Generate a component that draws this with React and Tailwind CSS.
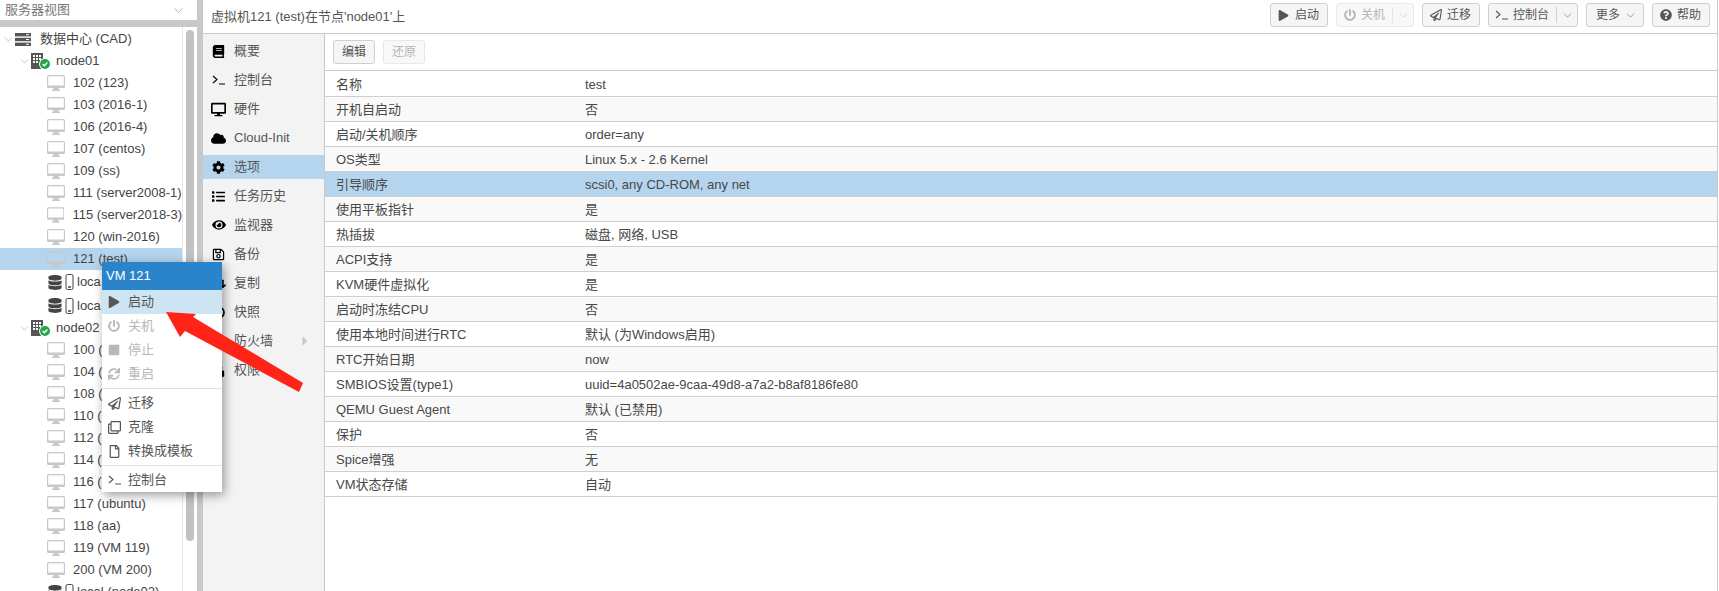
import { ChevronDown } from 'lucide-react';
import { FaBook, FaCloud, FaCog, FaList, FaEye, FaRegSave, FaRetweet, FaHistory, FaShieldAlt, FaUnlock, FaPlay, FaPowerOff, FaStop, FaSync, FaRegPaperPlane, FaRegClone, FaRegFile, FaQuestionCircle, FaDatabase, FaDesktop, FaCaretRight } from 'react-icons/fa';

const FONT = 'font-["Liberation_Sans","Noto_Sans_CJK_SC",sans-serif]';

function MonitorIcon() {
  return (
    <svg viewBox="0 0 18 16" className="w-[18px] h-4 text-[#c8c8c8]" fill="currentColor">
      <path d="M1.500 0h15A1.500 1.500 0 0 1 18 1.500v10a1.500 1.500 0 0 1-1.500 1.500H11.500v1.500H13V16H5v-1.500h1.500V13h-5A1.500 1.500 0 0 1 0 11.500v-10A1.500 1.500 0 0 1 1.500 0zM1.200 1.200V10.500h15.600V1.200z" fillRule="evenodd" />
    </svg>
  );
}

function ServerIcon() {
  return (
    <svg viewBox="0 0 16 13" className="w-4 h-[13px] text-[#555]" fill="currentColor">
      <rect x="0" y="0" width="16" height="3.400" />
      <rect x="0" y="4.800" width="16" height="3.400" />
      <rect x="0" y="9.600" width="16" height="3.400" />
      <rect x="11" y="1.200" width="3" height="1" fill="#fff" />
      <rect x="11" y="6" width="3" height="1" fill="#fff" />
      <rect x="11" y="10.800" width="3" height="1" fill="#fff" />
    </svg>
  );
}

function NodeIcon() {
  return (
    <span className="relative w-[18px] h-4 shrink-0">
      <svg viewBox="0 0 12 16" className="w-3 h-4 text-[#555]" fill="currentColor">
        <path d="M0 0h12v16H0zM2 2v2h2V2zm3 0v2h2V2zm3 0v2h2V2zM2 5v2h2V5zm3 0v2h2V5zm3 0v2h2V5zM2 8v2h2V8zm3 0v2h2V8z" fillRule="evenodd" />
      </svg>
      <span className="absolute left-[9px] top-[6px] w-[10px] h-[10px] rounded-full bg-[#21a646] ring-1 ring-white flex items-center justify-center">
        <svg viewBox="0 0 10 10" className="w-2 h-2" fill="none" stroke="#fff" strokeWidth="1.800"><path d="M2 5l2.200 2.200L8 3" /></svg>
      </span>
    </span>
  );
}

function StorageIcon() {
  return (
    <span className="flex items-center gap-[3px]">
      <FaDatabase size={15} className="text-[#444] w-[14px]" />
      <svg viewBox="0 0 9 16" className="w-[9px] h-4 text-[#444]" fill="none" stroke="currentColor">
        <rect x="1" y="0.500" width="7" height="15" rx="1.500" />
        <path d="M3 13h3" strokeWidth="1.500" />
      </svg>
    </span>
  );
}

function Prompt() {
  return (
    <svg viewBox="0 0 13 10" className="w-[13px] h-[10px]" fill="none" stroke="currentColor" strokeWidth="1.100">
      <path d="M1 1l4 3.500L1 8M7 9h6" />
    </svg>
  );
}

function VmRow({ label, selected }) {
  return (
    <div className={`flex items-center h-[22px] pl-[47px] whitespace-nowrap ${selected ? 'bg-[#b5d5ee]' : ''}`}>
      <MonitorIcon />
      <span className="ml-[8px] text-[13px] text-[#444]">{label}</span>
    </div>
  );
}

function StorageRow({ label, className }) {
  return (
    <div className={`flex items-center pl-[48px] whitespace-nowrap ${className}`}>
      <StorageIcon />
      <span className="ml-[3px] text-[13px] text-[#444]">{label}</span>
    </div>
  );
}

function NodeRow({ label }) {
  return (
    <div className="flex items-center h-[22px] pl-[18px] whitespace-nowrap">
      <ChevronDown size={13} strokeWidth={1} className="text-[#999] shrink-0" />
      <NodeIcon />
      <span className="ml-[7px] text-[13px] text-[#444]">{label}</span>
    </div>
  );
}

const NODE1 = ['102 (123)', '103 (2016-1)', '106 (2016-4)', '107 (centos)', '109 (ss)', '111 (server2008-1)', '115 (server2018-3)', '120 (win-2016)'];
const NODE2 = ['100 (', '104 (', '108 (', '110 (', '112 (', '114 (', '116 (', '117 (ubuntu)', '118 (aa)', '119 (VM 119)', '200 (VM 200)'];

const NAV = [
  { label: '概要', icon: <FaBook size={13} /> },
  { label: '控制台', icon: <Prompt /> },
  { label: '硬件', icon: <FaDesktop size={15} /> },
  { label: 'Cloud-Init', icon: <FaCloud size={15} /> },
  { label: '选项', icon: <FaCog size={13} />, active: true },
  { label: '任务历史', icon: <FaList size={13} /> },
  { label: '监视器', icon: <FaEye size={14} /> },
  { label: '备份', icon: <FaRegSave size={13} /> },
  { label: '复制', icon: <FaRetweet size={15} /> },
  { label: '快照', icon: <FaHistory size={13} /> },
  { label: '防火墙', icon: <FaShieldAlt size={13} />, more: true },
  { label: '权限', icon: <FaUnlock size={13} /> },
];

const ROWS = [
  ['名称', 'test'],
  ['开机自启动', '否'],
  ['启动/关机顺序', 'order=any'],
  ['OS类型', 'Linux 5.x - 2.6 Kernel'],
  ['引导顺序', 'scsi0, any CD-ROM, any net', true],
  ['使用平板指针', '是'],
  ['热插拔', '磁盘, 网络, USB'],
  ['ACPI支持', '是'],
  ['KVM硬件虚拟化', '是'],
  ['启动时冻结CPU', '否'],
  ['使用本地时间进行RTC', '默认 (为Windows启用)'],
  ['RTC开始日期', 'now'],
  ['SMBIOS设置(type1)', 'uuid=4a0502ae-9caa-49d8-a7a2-b8af8186fe80'],
  ['QEMU Guest Agent', '默认 (已禁用)'],
  ['保护', '否'],
  ['Spice增强', '无'],
  ['VM状态存储', '自动'],
];

function ToolButton({ icon, label, disabled, split, width }) {
  return (
    <div className={`h-[24px] flex items-center rounded-[3px] border pl-[6px] text-[12px] whitespace-nowrap ${width} ${disabled ? 'border-[#e8e8e8] bg-[#f8f8f8] text-[#b5b5b5]' : 'border-[#cfcfcf] bg-[#f5f5f5] text-[#555]'}`}>
      <span className="w-[13px] flex justify-center">{icon}</span>
      <span className="ml-[5px]">{label}</span>
      {split && <span className={`ml-[7px] w-px h-[16px] ${disabled ? 'bg-[#e4e4e4]' : 'bg-[#d0d0d0]'}`} />}
      {split && <span className="flex-1 flex justify-center"><ChevronDown size={13} strokeWidth={1} /></span>}
    </div>
  );
}

function MenuItem({ icon, label, disabled, active }) {
  return (
    <div className={`h-[24px] flex items-center pl-[5px] text-[13px] ${active ? 'bg-[#cde4f3] text-[#555]' : disabled ? 'text-[#b8b8b8]' : 'text-[#555]'}`}>
      <span className="w-[14px] flex justify-center">{icon}</span>
      <span className="ml-[7px]">{label}</span>
    </div>
  );
}

function MenuSeparator() {
  return <div className="h-[5px] pt-[2px]"><div className="h-px bg-[#e0e0e0]" /></div>;
}

export default function App() {
  return (
    <div className={`${FONT} w-[1719px] h-[591px] overflow-hidden flex bg-white relative`}>
      <aside className="w-[197px] shrink-0 flex flex-col">
        <div className="h-[20px] bg-white flex items-center justify-between pl-[5px] pr-[11px]">
          <span className="text-[13px] text-[#777]">服务器视图</span>
          <ChevronDown size={15} strokeWidth={1} className="text-[#888]" />
        </div>
        <div className="h-[7px] bg-[#c8c8c8]" />
        <div className="flex-1 flex min-h-0">
          <div className="w-[183px] bg-white pt-[1px] overflow-hidden border-r border-[#e6e6e6]">
            <div className="flex items-center h-[22px] pl-[2px] whitespace-nowrap">
              <ChevronDown size={13} strokeWidth={1} className="text-[#999] shrink-0" />
              <ServerIcon />
              <span className="ml-[9px] text-[13px] text-[#444]">数据中心 (CAD)</span>
            </div>
            <NodeRow label="node01" />
            {NODE1.map((n) => <VmRow key={n} label={n} />)}
            <VmRow selected label="121 (test)" />
            <StorageRow label="loca" className="h-[24px]" />
            <StorageRow label="loca" className="h-[23px]" />
            <NodeRow label="node02" />
            {NODE2.map((n) => <VmRow key={n} label={n} />)}
            <StorageRow label="local (node02)" className="h-[22px]" />
          </div>
          <div className="w-[14px] bg-white pt-[3px] pl-[3px] shrink-0">
            <div className="w-[8px] h-[511px] rounded-full bg-[#c2c2c2]" />
          </div>
        </div>
      </aside>
      <div className="w-[6px] shrink-0 bg-[#c8c8c8]" />
      <main className="flex-1 flex flex-col min-w-0 mr-[1px] border-r border-[#c8c8c8]">
        <header className="h-[34px] bg-white border-b border-[#c8c8c8] flex items-center pl-[8px] pr-[7px] shrink-0">
          <span className="text-[13px] text-[#555]">虚拟机121 (test)在节点'node01'上</span>
          <div className="ml-auto self-start mt-[3px] flex items-center gap-[8px]">
            <ToolButton width="w-[58px]" icon={<FaPlay size={11} />} label="启动" />
            <ToolButton width="w-[78px]" disabled icon={<FaPowerOff size={12} />} label="关机" split />
            <ToolButton width="w-[58px]" icon={<FaRegPaperPlane size={12} />} label="迁移" />
            <ToolButton width="w-[90px]" icon={<Prompt />} label="控制台" split />
            <div className="h-[24px] w-[58px] flex items-center rounded-[3px] border border-[#cfcfcf] bg-[#f5f5f5] pl-[9px] text-[12px] text-[#555]">
              <span>更多</span>
              <ChevronDown size={13} strokeWidth={1} className="ml-[4px]" />
            </div>
            <ToolButton width="w-[58px]" icon={<FaQuestionCircle size={12} />} label="帮助" />
          </div>
        </header>
        <div className="flex-1 flex min-h-0 bg-white">
          <nav className="w-[122px] shrink-0 bg-[#f3f3f3] border-r border-[#c8c8c8] pt-[5px] flex flex-col gap-[5px]">
            {NAV.map((item) => (
              <div key={item.label} className={`h-[24px] shrink-0 flex items-center text-[13px] text-[#555] ${item.active ? 'bg-[#b5d5ee]' : ''}`}>
                <span className="w-[31px] flex justify-center text-black">{item.icon}</span>
                <span>{item.label}</span>
                {item.more && <FaCaretRight size={14} className="ml-auto mr-[12px] text-[#c8c8c8]" />}
              </div>
            ))}
          </nav>
          <section className="flex-1 min-w-0">
            <div className="h-[37px] flex items-center gap-[8px] pl-[8px] border-b border-[#c8c8c8]">
              <button className="h-[24px] w-[42px] rounded-[3px] border border-[#cfcfcf] bg-[#f5f5f5] text-[12px] text-[#555]">编辑</button>
              <button className="h-[24px] w-[42px] rounded-[3px] border border-[#e8e8e8] bg-[#f8f8f8] text-[12px] text-[#b5b5b5]">还原</button>
            </div>
            <div className="pt-[1px]">
              {ROWS.map(([name, value, active], i) => (
                <div key={name} className={`h-[25px] pt-[1px] flex items-center border-b border-[#cfcfcf] text-[13px] text-[#484848] ${active ? 'bg-[#b5d5ee]' : i % 2 === 1 ? 'bg-[#f9f9f9]' : ''}`}>
                  <span className="w-[260px] pl-[11px]">{name}</span>
                  <span>{value}</span>
                </div>
              ))}
            </div>
          </section>
        </div>
      </main>

      <div className="absolute left-[102px] top-[262px] w-[120px] bg-white shadow-[2px_3px_10px_rgba(0,0,0,0.4)]">
        <div className="h-[28px] bg-[#2a84cb] flex items-center pl-[4px] text-[13px] text-white">VM 121</div>
        <MenuItem active icon={<FaPlay size={12} />} label="启动" />
        <MenuItem disabled icon={<FaPowerOff size={12} />} label="关机" />
        <MenuItem disabled icon={<FaStop size={12} />} label="停止" />
        <MenuItem disabled icon={<FaSync size={12} />} label="重启" />
        <MenuSeparator />
        <MenuItem icon={<FaRegPaperPlane size={13} />} label="迁移" />
        <MenuItem icon={<FaRegClone size={13} />} label="克隆" />
        <MenuItem icon={<FaRegFile size={13} />} label="转换成模板" />
        <MenuSeparator />
        <MenuItem icon={<Prompt />} label="控制台" />
      </div>

      <svg className="absolute left-[160px] top-[305px] w-[150px] h-[95px]" viewBox="0 0 150 95" fill="#ff2318">
        <path d="M6 7 L36 9 L33 12 L143 78 L139 87 L25 26 L20 32 Z" />
      </svg>
    </div>
  );
}
